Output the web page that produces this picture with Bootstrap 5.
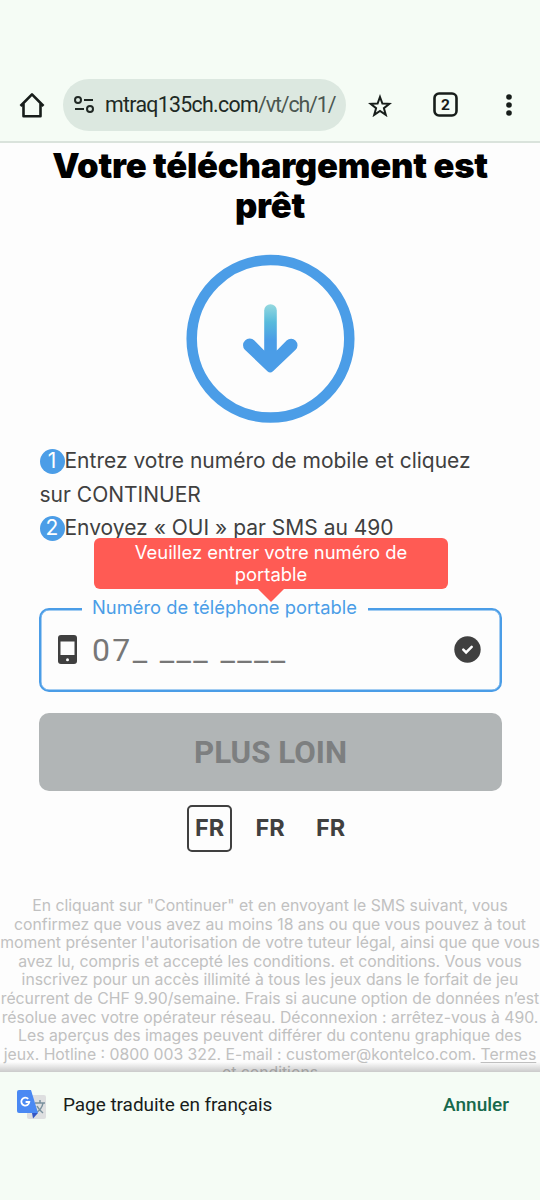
<!DOCTYPE html>
<html lang="fr">
<head>
<meta charset="utf-8">
<meta name="viewport" content="width=device-width, initial-scale=1">
<title>Votre téléchargement est prêt</title>
<link href="https://cdn.jsdelivr.net/npm/bootstrap@5.3.0/dist/css/bootstrap.min.css" rel="stylesheet">
<style>
body{width:540px;height:1200px;overflow:hidden;background:#fdfdfd;color:#404040;font-family:Inter,sans-serif}
svg{display:block;flex:none}
.browser-bar{height:143px;padding:79px 0 11px 18px;background:#f5fcf5;border-bottom:2px solid #dae3dc;color:#171d1a;font-family:Roboto,sans-serif}
.address{width:283px;height:52px;margin-left:17px;padding-left:11px;border-radius:27px;background:#dce8e0;font-size:21.3px;letter-spacing:-.68px;white-space:nowrap;color:#202824}
.address .path{color:#4b5650;letter-spacing:-1.1px}
.page-area{height:929px;position:relative;overflow:hidden}
.page-area::after{content:"";position:absolute;left:0;right:0;bottom:0;height:10px;background:linear-gradient(transparent,rgba(0,0,0,.2))}
h1{font-size:34.6px;line-height:40px;font-weight:900;letter-spacing:-.22px;color:#000;padding-top:2px;white-space:nowrap}
.steps{height:101px;margin:20px 38px 0 39.5px;font-size:21px;line-height:33.6px;white-space:nowrap}
.num{display:inline-block;width:25px;height:25px;border-radius:50%;background:#4b9de7;color:#fff;text-align:center;line-height:23px}
.field{margin:63px 38px 0 39px;height:84px;border:2px solid #4b9de7;box-shadow:inset 0 0 0 .5px #4b9de7;border-radius:10px;padding:0 19px 0 17px}
.field-label{left:41px;top:-15px;padding:0 11px 0 10px;background:#fdfdfd;color:#4b9de7;font-size:18.35px;line-height:24px;white-space:nowrap}
.phone{font:400 32px/40px Roboto,sans-serif;letter-spacing:2.35px;color:#777;margin:-1px 0 0 15px;white-space:pre}
.alert-tip{left:53px;top:-72px;width:354px;height:51px;border-radius:6px;background:#ff5b54;color:#fff;font-size:18.4px;line-height:22px;padding-top:3px;white-space:nowrap}
.alert-tip::after{content:"";position:absolute;left:164px;top:51px;border:13px solid transparent;border-top-color:#ff5b54;border-bottom:0}
.next{margin:21px 38px 0 39px;height:78px;border-radius:10px;background:#b1b5b6;color:#7d7f80;font:700 31.3px/77px Roboto,sans-serif;border:0;width:463px}
.langs{margin:14px 0 0 187px;gap:15.5px;font-size:23.5px;font-weight:700}
.langs span{width:45px;height:47px;line-height:42px;border:2px solid transparent;border-radius:5px;text-align:center}
.langs .chosen{border-color:#404040}
.legal{margin-top:45px;font-size:15.77px;line-height:18.6px;color:#c1c1c1;white-space:nowrap}
.legal span{display:block}
.legal u{text-underline-offset:2px}
.translate{height:128px;background:#f5fcf5;color:#191d1b;font:400 19px/26px Roboto,sans-serif;padding:18px 31px 0 17px}
.translate span{margin-top:2px}
.translate .message{margin-left:16px;letter-spacing:-.05px}
.cancel{color:#17694c;font-weight:500}
</style>
</head>
<body>
<header class="browser-bar d-flex align-items-center">
<svg width="28" height="28" viewBox="0 0 28 28" fill="none" stroke="#171d1a" stroke-width="2.6"><path d="M2.500 15 14 3.400 25.500 15M5.500 12v13.200h17V12" stroke-linejoin="round"/></svg>
<div class="address d-flex align-items-center">
<svg width="20" height="18" viewBox="0 0 20 18" fill="none" stroke="#202824" stroke-width="2"><circle cx="4" cy="4" r="3"/><path d="M10 4h9M1 13h9"/><circle cx="16" cy="13" r="3"/></svg>
<span style="margin-left:11px">mtraq135ch.com<span class="path">/vt/ch/1/</span></span>
</div>
<svg width="24" height="24" viewBox="0 0 24 24" fill="none" stroke="#171d1a" stroke-width="2" style="margin-left:22px"><path d="m12 4 2.400 6.500 7 .3-5.500 4.400 1.900 6.700-5.800-3.900-5.800 3.900 1.900-6.700-5.500-4.400 7-.3z"/></svg>
<svg width="25" height="25" viewBox="0 0 25 25" style="margin-left:41px"><rect x="1.500" y="1.500" width="22" height="22" rx="4.500" fill="none" stroke="#171d1a" stroke-width="2.600"/><text x="12.500" y="18" text-anchor="middle" font-family="Roboto" font-size="15.500" font-weight="700" fill="#171d1a">2</text></svg>
<svg width="8" height="24" viewBox="0 0 8 24" fill="#171d1a" style="margin-left:46.500px"><circle cx="4" cy="4" r="2.800"/><circle cx="4" cy="12" r="2.800"/><circle cx="4" cy="20" r="2.800"/></svg>
</header>
<main class="page-area">
<h1 class="text-center mb-0">Votre téléchargement est<br>prêt</h1>
<svg class="mx-auto" width="170" height="170" viewBox="0 0 170 170" style="margin-top:29px"><defs><linearGradient id="shaft" x1="0" y1="50" x2="0" y2="86" gradientUnits="userSpaceOnUse"><stop stop-color="#96d9df"/><stop offset=".5" stop-color="#58bbdc"/><stop offset="1" stop-color="#4b9de7"/></linearGradient></defs><circle cx="85.500" cy="84.800" r="78.800" fill="none" stroke="#4b9de7" stroke-width="10.500"/><path d="M79.200 56.500a6.300 6.300 0 0 1 12.600 0V100H79.200z" fill="url(#shaft)"/><path d="m79.200 96.500-9.800-9.900a6.300 6.300 0 0 0-9.500 9.200l22.500 21.400q2.800 2.600 5.600 0L110.600 95.800a6.300 6.300 0 0 0-9-9.200l-9.800 9.900z" fill="#4b9de7"/></svg>
<div class="steps"><span class="num">1</span>Entrez votre numéro de mobile et cliquez<br>sur CONTINUER<br><span class="num">2</span>Envoyez « OUI » par SMS au 490</div>
<div class="field position-relative d-flex align-items-center">
<svg width="19" height="30" viewBox="0 0 19 30" style="margin-top:-1px"><rect width="19" height="29" rx="3" fill="#404040"/><path d="M2.500 6.500h14V20h-14z" fill="#fdfdfd"/><circle cx="9.500" cy="24.700" r="1.500" fill="#fdfdfd"/></svg>
<span class="phone">07_ ___ ____</span>
<svg class="ms-auto" width="27" height="27" viewBox="0 0 27 27" style="margin-top:-1px"><circle cx="13.500" cy="13.500" r="13.200" fill="#404040"/><path d="m9.300 13.700 2.800 2.800 5.600-5.600" fill="none" stroke="#fff" stroke-width="2.500" stroke-linecap="round"/></svg>
<span class="field-label position-absolute">Numéro de téléphone portable</span>
<div class="alert-tip position-absolute text-center">Veuillez entrer votre numéro de<br>portable</div>
</div>
<button class="next d-block p-0">PLUS LOIN</button>
<div class="langs d-flex"><span class="chosen">FR</span><span>FR</span><span>FR</span></div>
<div class="legal text-center">
<span>En cliquant sur "Continuer" et en envoyant le SMS suivant, vous</span>
<span>confirmez que vous avez au moins 18 ans ou que vous pouvez à tout</span>
<span>moment présenter l'autorisation de votre tuteur légal, ainsi que que vous</span>
<span>avez lu, compris et accepté les conditions. et conditions. Vous vous</span>
<span>inscrivez pour un accès illimité à tous les jeux dans le forfait de jeu</span>
<span>récurrent de CHF 9.90/semaine. Frais si aucune option de données n’est</span>
<span>résolue avec votre opérateur réseau. Déconnexion : arrêtez-vous à 490.</span>
<span>Les aperçus des images peuvent différer du contenu graphique des</span>
<span>jeux. Hotline : 0800 003 322. E-mail : customer@kontelco.com. <u>Termes</u></span>
<span><u>et conditions</u></span>
</div>
</main>
<footer class="translate d-flex align-items-start">
<svg width="30" height="30" viewBox="0 0 30 30"><rect x="10" y="5" width="19" height="24" rx="2" fill="#dedfe0"/><path d="M18 13h10M23 10v3M26 13q-1 6-7 10M20 16q2 4 6 7" fill="none" stroke="#78909c" stroke-width="1.500"/><path d="m15 23 6 0-5 5.500z" fill="#3456c4"/><path d="M2 0h12l7 23H2q-2 0-2-2V2q0-2 2-2z" fill="#4a89f3"/><path d="M11.200 8.800A4 4 0 1 0 12.300 12H8.600" fill="none" stroke="#fff" stroke-width="1.800"/></svg>
<span class="message">Page traduite en français</span><span class="cancel ms-auto">Annuler</span>
</footer>
<script src="https://cdn.jsdelivr.net/npm/bootstrap@5.3.0/dist/js/bootstrap.bundle.min.js"></script>
</body>
</html>
